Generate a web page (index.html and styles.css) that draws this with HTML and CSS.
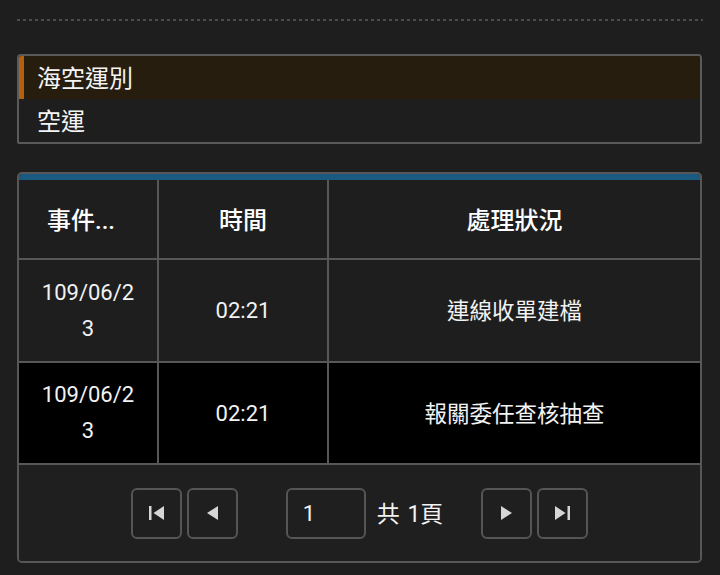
FILE: index.html
```html
<!DOCTYPE html>
<html lang="zh-Hant">
<head>
<meta charset="utf-8">
<title>海空運別</title>
<link rel="stylesheet" href="styles.css">
</head>
<body>
<div class="page">
  <div class="divider"></div>

  <div class="list">
    <div class="list-item active">海空運別</div>
    <div class="list-item">空運</div>
  </div>

  <div class="grid-box">
    <div class="grid-top"></div>
    <div class="grid">
      <div class="cell head first">事件...</div>
      <div class="cell head">時間</div>
      <div class="cell head">處理狀況</div>

      <div class="cell date">109/06/23</div>
      <div class="cell">02:21</div>
      <div class="cell status">連線收單建檔</div>

      <div class="cell date alt">109/06/23</div>
      <div class="cell alt">02:21</div>
      <div class="cell status alt">報關委任查核抽查</div>
    </div>
    <div class="pager">
      <button class="pg-btn" type="button" aria-label="first">
        <svg width="15" height="14" viewBox="0 0 15 14"><rect x="0" y="0" width="2.5" height="14" fill="#d6d6d6"/><polygon points="15,0 15,14 4.5,7" fill="#d6d6d6"/></svg>
      </button>
      <button class="pg-btn gap-s" type="button" aria-label="prev">
        <svg width="11" height="14" viewBox="0 0 11 14"><polygon points="11,0 11,14 0,7" fill="#d6d6d6"/></svg>
      </button>
      <div class="pg-input">1</div>
      <div class="pg-total">共 1頁</div>
      <button class="pg-btn gap-l" type="button" aria-label="next">
        <svg width="11" height="14" viewBox="0 0 11 14"><polygon points="0,0 0,14 11,7" fill="#d6d6d6"/></svg>
      </button>
      <button class="pg-btn gap-s" type="button" aria-label="last">
        <svg width="15" height="14" viewBox="0 0 15 14"><polygon points="0,0 0,14 10.5,7" fill="#d6d6d6"/><rect x="12.5" y="0" width="2.5" height="14" fill="#d6d6d6"/></svg>
      </button>
    </div>
  </div>
</div>
</body>
</html>
```
FILE: styles.css
```css
html, body {
  margin: 0;
  padding: 0;
  background: #1e1e1e;
}

body {
  font-family: "Roboto", "Noto Sans CJK TC", sans-serif;
  color: #f2f2f2;
}

.page {
  padding: 19px 18px 0 17px;
}

.divider {
  height: 2px;
  margin-right: -1px;
  background: repeating-linear-gradient(to right, #4c4c4c 0 3px, transparent 3px 6px);
}

.list {
  margin-top: 33px;
  border: 2px solid #5a5a5a;
  border-radius: 4px 4px 2px 2px;
  overflow: hidden;
}

.list-item {
  height: 43px;
  line-height: 46px;
  padding-left: 18px;
  font-size: 24px;
  color: #f4f4f4;
}

.list-item.active {
  background: #261d0f;
  border-left: 5px solid #b4600f;
  padding-left: 13px;
}

.grid-box {
  margin-top: 28px;
  border: 2px solid #575757;
  border-radius: 5px;
  overflow: hidden;
}

.grid-top {
  height: 6px;
  background: #1b5a80;
}

.grid {
  display: grid;
  grid-template-columns: 138px 168px 1fr;
  grid-template-rows: 78px 101px 100px;
  gap: 2px;
  background: #575757;
}

.cell {
  background: #1e1e1e;
  display: flex;
  align-items: center;
  justify-content: center;
  text-align: center;
  font-size: 22px;
  color: #f2f2f2;
}

.cell.status {
  font-size: 22.5px;
  padding-bottom: 3px;
}

.cell.head {
  font-size: 24px;
  font-weight: 500;
  color: #ffffff;
  padding-bottom: 2px;
}

.cell.head.first {
  justify-content: flex-start;
  padding-left: 28px;
}

.cell.date {
  padding: 0 18px;
  font-size: 22px;
  line-height: 36px;
  word-break: break-all;
}

.cell.alt {
  background: #000000;
}

.pager {
  border-top: 2px solid #575757;
  height: 96px;
  display: flex;
  align-items: center;
  justify-content: center;
  background: #1f1f1f;
}

.pg-btn {
  width: 51px;
  height: 51px;
  padding: 0;
  margin: 0;
  border: 2px solid #555555;
  border-radius: 6px;
  background: transparent;
  display: flex;
  align-items: center;
  justify-content: center;
}

.pg-btn.gap-s {
  margin-left: 5px;
}

.pg-btn.gap-l {
  margin-left: 38px;
}

.pg-input {
  box-sizing: border-box;
  width: 80px;
  height: 51px;
  margin-left: 48px;
  border: 2px solid #555555;
  border-radius: 6px;
  padding-left: 15px;
  display: flex;
  align-items: center;
  font-size: 22px;
  color: #f2f2f2;
}

.pg-total {
  margin-left: 11px;
  font-size: 23px;
  color: #f2f2f2;
  word-spacing: 2px;
  padding-bottom: 2px;
}
```
